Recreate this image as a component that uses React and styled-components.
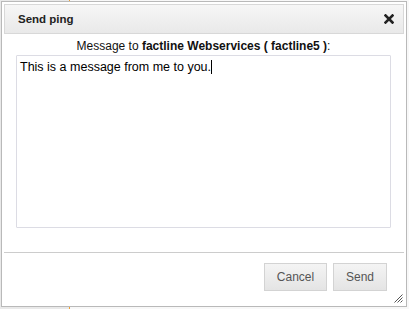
import React from "react";
import styled, { createGlobalStyle } from "styled-components";

const GlobalStyle = createGlobalStyle`
  html, body {
    margin: 0;
    padding: 0;
  }
  body {
    width: 409px;
    height: 309px;
    overflow: hidden;
    background: linear-gradient(
      to right,
      #e9e9e9 0,
      #e9e9e9 69px,
      #f0a030 69px,
      #f0a030 70px,
      #f8f8f8 70px
    );
    font-family: "Liberation Sans", Arial, sans-serif;
  }
`;

const Dialog = styled.div`
  position: relative;
  margin: 1px 0 0 1px;
  width: 406px;
  height: 306px;
  box-sizing: border-box;
  padding: 2px;
  border: 1px solid #b9b9b9;
  background: #fff;
  display: flex;
  flex-direction: column;
`;

const Header = styled.div`
  height: 30px;
  box-sizing: border-box;
  border: 1px solid #d8d8d8;
  background: linear-gradient(to bottom, #f6f6f6, #e9e9e9);
  display: flex;
  align-items: center;
  justify-content: space-between;
  padding: 0 8px 0 13px;
`;

const Title = styled.span`
  font-size: 11.5px;
  font-weight: bold;
  color: #222;
`;

const CloseButton = styled.button`
  border: 0;
  background: none;
  padding: 0;
  width: 12px;
  height: 12px;
  display: flex;
  align-items: center;
  justify-content: center;
  cursor: pointer;
`;

const Body = styled.div`
  flex: 1;
  display: flex;
  flex-direction: column;
  padding: 5px 13px 0 12px;
`;

const Label = styled.div`
  font-size: 12px;
  line-height: 14px;
  color: #111;
  text-align: center;
  margin-bottom: 2px;
  b {
    font-weight: bold;
  }
`;

const MessageBox = styled.div`
  height: 173px;
  box-sizing: border-box;
  border: 1px solid #dcdce4;
  border-radius: 1px;
  padding: 4px 3px;
  font-size: 12.5px;
  line-height: 14px;
  color: #000;
`;

const Caret = styled.span`
  display: inline-block;
  width: 1px;
  height: 14px;
  background: #000;
  vertical-align: top;
`;

const ButtonPane = styled.div`
  height: 52px;
  box-sizing: border-box;
  border-top: 1px solid #cccccc;
  display: flex;
  justify-content: flex-end;
  align-items: flex-start;
  gap: 6px;
  padding: 10px 17px 0 0;
`;

const Button = styled.button`
  height: 28px;
  width: ${(p) => p.$w}px;
  box-sizing: border-box;
  border: 1px solid #d3d3d3;
  background: linear-gradient(to bottom, #f4f4f4, #e4e4e4);
  color: #555;
  font-family: "Liberation Sans", Arial, sans-serif;
  font-size: 12px;
  padding: 0;
  cursor: pointer;
`;

const Resizer = styled.svg`
  position: absolute;
  right: 3px;
  bottom: 3px;
`;

const CloseIcon = () => (
  <svg width="10" height="10" viewBox="0 0 10 10">
    <path
      d="M1.5 1.5 L8.5 8.5 M8.5 1.5 L1.5 8.5"
      stroke="#222"
      strokeWidth="2.6"
      strokeLinecap="square"
    />
  </svg>
);

const App = () => {
  return (
    <>
      <GlobalStyle />
      <Dialog>
        <Header>
          <Title>Send ping</Title>
          <CloseButton aria-label="close">
            <CloseIcon />
          </CloseButton>
        </Header>
        <Body>
          <Label>
            Message to <b>factline Webservices ( factline5 )</b>:
          </Label>
          <MessageBox>
            This is a message from me to you.
            <Caret />
          </MessageBox>
        </Body>
        <ButtonPane>
          <Button $w={63}>Cancel</Button>
          <Button $w={54}>Send</Button>
        </ButtonPane>
        <Resizer width="9" height="9" viewBox="0 0 9 9">
          <path
            d="M8.5 0.5 L0.5 8.5 M8.5 3.5 L3.5 8.5 M8.5 6.5 L6.5 8.5"
            stroke="#555"
            strokeWidth="1"
          />
        </Resizer>
      </Dialog>
    </>
  );
};

export default App;
